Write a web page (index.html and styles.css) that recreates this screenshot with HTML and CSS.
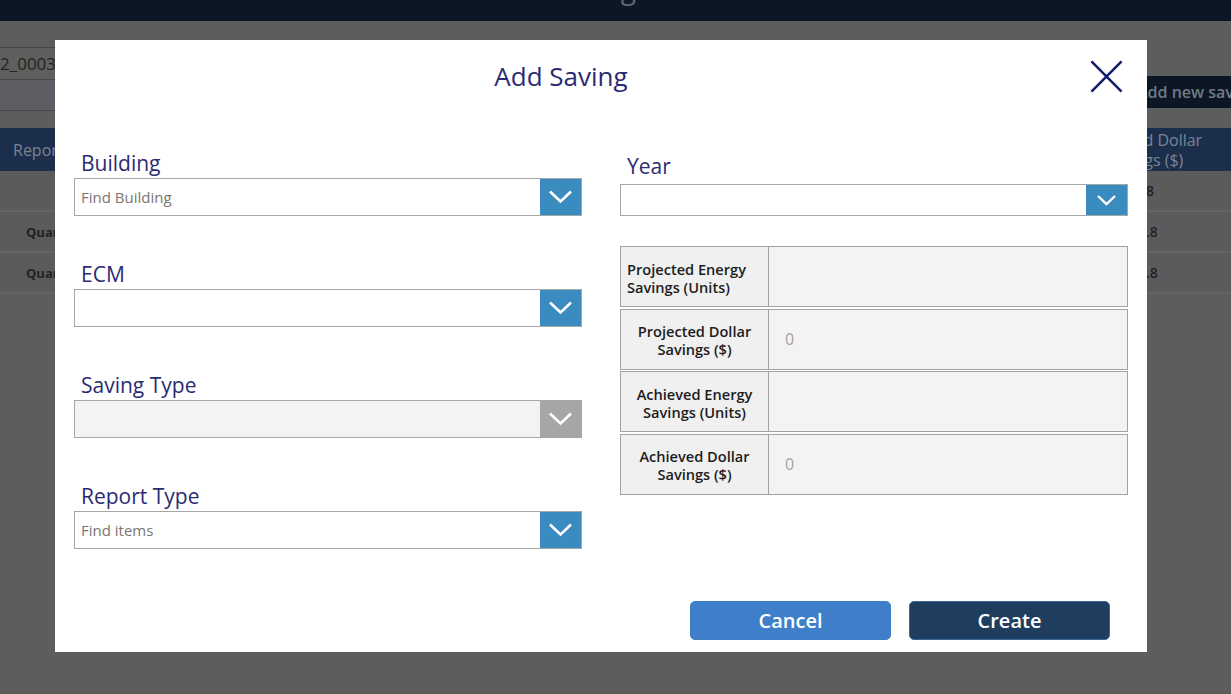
FILE: index.html
```html
<!DOCTYPE html>
<html lang="en">
<head>
<meta charset="utf-8">
<title>Add Saving</title>
<link rel="stylesheet" href="styles.css">
</head>
<body>
<div class="app">
  <header class="topbar"><span class="page-title">Savings</span></header>
  <div class="toolbar">
    <div class="filters">
      <div class="filter-input">2_0003</div>
      <div class="filter-input alt"></div>
    </div>
    <div class="add-btn">Add new saving</div>
  </div>
  <div class="grid">
    <div class="grid-head">
      <div class="hc first">Report Type</div>
      <div class="hc"></div>
      <div class="hc last">Achieved Dollar Savings ($)</div>
    </div>
    <div class="grid-row"><div class="c first"></div><div class="c"></div><div class="c last">48</div></div>
    <div class="grid-row"><div class="c first">Quarterly</div><div class="c"></div><div class="c last">2.8</div></div>
    <div class="grid-row"><div class="c first">Quarterly</div><div class="c"></div><div class="c last">2.8</div></div>
  </div>
</div>

<div class="modal" role="dialog" aria-labelledby="dlg-title">
  <div class="modal-head">
    <h1 class="modal-title" id="dlg-title">Add Saving</h1>
    <button class="close" aria-label="Close">
      <svg viewBox="0 0 34 34" width="34" height="34"><path d="M1.5 1.5L32.5 32.5M32.5 1.5L1.5 32.5" stroke="#121b6b" stroke-width="2.6" fill="none"/></svg>
    </button>
  </div>

  <div class="modal-body">
    <div class="col col-left">
      <div class="field">
        <div class="flabel">Building</div>
        <div class="select">
          <span class="placeholder">Find Building</span>
          <span class="sbtn"><svg viewBox="0 0 41 36" width="41" height="36"><polyline points="10,12.5 20.5,22.5 31,12.5" fill="none" stroke="#fff" stroke-width="2.6"/></svg></span>
        </div>
      </div>
      <div class="field">
        <div class="flabel">ECM</div>
        <div class="select">
          <span class="placeholder"></span>
          <span class="sbtn"><svg viewBox="0 0 41 36" width="41" height="36"><polyline points="10,12.5 20.5,22.5 31,12.5" fill="none" stroke="#fff" stroke-width="2.6"/></svg></span>
        </div>
      </div>
      <div class="field">
        <div class="flabel">Saving Type</div>
        <div class="select disabled">
          <span class="placeholder"></span>
          <span class="sbtn"><svg viewBox="0 0 41 36" width="41" height="36"><polyline points="10,12.5 20.5,22.5 31,12.5" fill="none" stroke="#fff" stroke-width="2.6"/></svg></span>
        </div>
      </div>
      <div class="field">
        <div class="flabel">Report Type</div>
        <div class="select">
          <span class="placeholder">Find items</span>
          <span class="sbtn"><svg viewBox="0 0 41 36" width="41" height="36"><polyline points="10,12.5 20.5,22.5 31,12.5" fill="none" stroke="#fff" stroke-width="2.6"/></svg></span>
        </div>
      </div>
    </div>

    <div class="col col-right">
      <div class="field year">
        <div class="flabel">Year</div>
        <div class="select small">
          <span class="placeholder"></span>
          <span class="sbtn"><svg viewBox="0 0 41 30" width="41" height="30"><polyline points="12,11 20.5,19 29,11" fill="none" stroke="#fff" stroke-width="2.4"/></svg></span>
        </div>
      </div>
      <div class="stats">
        <div class="stat">
          <div class="stat-label start">Projected Energy Savings (Units)</div>
          <div class="stat-value"></div>
        </div>
        <div class="stat">
          <div class="stat-label">Projected Dollar Savings ($)</div>
          <div class="stat-value">0</div>
        </div>
        <div class="stat">
          <div class="stat-label">Achieved Energy Savings (Units)</div>
          <div class="stat-value"></div>
        </div>
        <div class="stat">
          <div class="stat-label">Achieved Dollar Savings ($)</div>
          <div class="stat-value">0</div>
        </div>
      </div>
    </div>
  </div>

  <div class="modal-foot">
    <button class="btn cancel">Cancel</button>
    <button class="btn create">Create</button>
  </div>
</div>
</body>
</html>
```

FILE: styles.css
```css
* { box-sizing: border-box; }

body {
  margin: 0;
  width: 1231px;
  height: 694px;
  overflow: hidden;
  background: #5d5d5d;
  font-family: "Open Sans", "Noto Sans", sans-serif;
}

/* ---------- dimmed background page ---------- */
.topbar {
  height: 21px;
  background: #0b1724;
  overflow: hidden;
  display: flex;
  justify-content: center;
  padding-right: 30px;
}
.page-title {
  font-size: 28px;
  line-height: 28px;
  margin-top: -26px;
  color: #5b6673;
}

.toolbar {
  display: flex;
  justify-content: space-between;
  padding-top: 26px;
}
.filters {
  width: 300px;
  display: flex;
  flex-direction: column;
}
.filter-input {
  height: 32px;
  border-top: 1px solid #474747;
  background: #5f5f5f;
  color: #232323;
  font-size: 17px;
  display: flex;
  align-items: center;
}
.filter-input.alt {
  height: 32px;
  background: #5e5d64;
  border-bottom: 1px solid #474747;
}
.add-btn {
  margin-top: 29px;
  height: 32px;
  width: 130px;
  padding-left: 36px;
  background: #0b1724;
  color: #727a85;
  font-size: 16px;
  font-weight: 600;
  white-space: nowrap;
  overflow: hidden;
  display: flex;
  align-items: center;
}

.grid { margin-top: 17px; }
.grid-head {
  height: 43px;
  background: #1b2f4d;
  display: grid;
  grid-template-columns: 55px 1fr 162px;
  color: #7b8491;
  font-size: 16px;
  line-height: 20px;
}
.hc { display: flex; align-items: center; }
.hc.first { padding-left: 13px; white-space: nowrap; overflow: hidden; }
.hc.last { justify-content: center; text-align: center; padding-right: 12px; }

.grid-row {
  height: 41px;
  background: #5b5b5b;
  border-bottom: 2px solid #646464;
  display: grid;
  grid-template-columns: 55px 1fr 162px;
  color: #1f2227;
  font-size: 13px;
  font-weight: 700;
}
.c { display: flex; align-items: center; }
.c.first { padding-left: 26px; white-space: nowrap; overflow: hidden; }
.c.last { padding-left: 69px; font-weight: 600; font-size: 14px; }

/* ---------- modal ---------- */
.modal {
  position: fixed;
  left: 55px;
  top: 40px;
  width: 1092px;
  height: 612px;
  background: #fff;
  display: flex;
  flex-direction: column;
}

.modal-head {
  display: grid;
  grid-template-columns: 1fr 33px;
  column-gap: 23px;
  padding: 20px 24px 0 0;
}
.modal-title {
  margin: 0;
  text-align: center;
  font-size: 26px;
  line-height: 33px;
  font-weight: 400;
  color: #2a2b72;
}
.close {
  width: 33px;
  height: 33px;
  padding: 0;
  border: 0;
  background: none;
  display: block;
}
.close svg { display: block; width: 33px; height: 33px; }

.modal-body {
  margin-top: 56px;
  padding-left: 19px;
  display: grid;
  grid-template-columns: 508px 508px;
  column-gap: 38px;
}

.col { display: flex; flex-direction: column; }
.col-left { gap: 44px; }
.col-right { padding-top: 3px; }

.flabel {
  height: 28px;
  line-height: 28px;
  font-size: 21px;
  padding-left: 7px;
  margin-bottom: 1px;
  color: #2a2b72;
  white-space: nowrap;
}

.select {
  height: 38px;
  border: 1px solid #a6a6a6;
  background: #fff;
  display: flex;
  align-items: stretch;
}
.select.disabled { background: #f3f3f3; }
.select.small { height: 32px; }
.placeholder {
  flex: 1;
  display: flex;
  align-items: center;
  padding-left: 6px;
  font-size: 15px;
  color: #7a7672;
}
.sbtn {
  width: 41px;
  background: #3a8bc0;
  display: flex;
  align-items: center;
  justify-content: center;
}
.sbtn svg { display: block; }
.select.disabled .sbtn { background: #a6a6a6; }

.year .flabel { margin-bottom: 4px; }

.stats {
  margin-top: 30px;
  display: flex;
  flex-direction: column;
  gap: 1.67px;
}
.stat {
  height: 61px;
  border: 1px solid #a2a2a2;
  display: grid;
  grid-template-columns: 148px 1fr;
}
.stat-label {
  background: #f0f0f0;
  border-right: 1px solid #a2a2a2;
  display: flex;
  align-items: center;
  justify-content: center;
  text-align: center;
  padding: 2px 6px 0;
  font-size: 14.6px;
  line-height: 18px;
  font-weight: 600;
  color: #1c1c1c;
}
.stat-label.start { justify-content: flex-start; text-align: left; }
.stat-value {
  background: #f3f3f3;
  display: flex;
  align-items: center;
  padding-left: 16px;
  font-size: 16px;
  color: #a3a3a3;
}

.modal-foot {
  margin-top: auto;
  display: flex;
  justify-content: flex-end;
  gap: 18px;
  padding: 0 37px 12px 0;
}
.btn {
  width: 201px;
  height: 39px;
  border-radius: 5px;
  font-family: inherit;
  font-size: 20px;
  font-weight: 600;
  color: #fff;
  padding: 0;
}
.btn.cancel { background: #3f7fc9; border: 1px solid #3f7fc9; }
.btn.create { background: #1e3d5f; border: 1px solid #3b6894; }
```
